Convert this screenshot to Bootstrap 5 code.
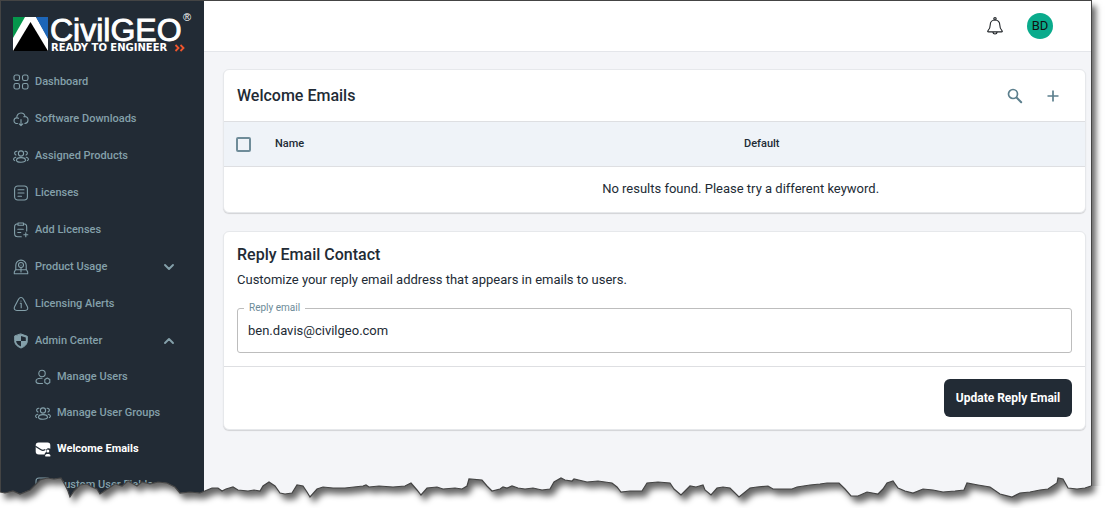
<!DOCTYPE html>
<html lang="en">
<head>
<meta charset="utf-8">
<meta name="viewport" content="width=device-width, initial-scale=1">
<title>CivilGEO - Welcome Emails</title>
<link href="https://cdn.jsdelivr.net/npm/bootstrap@5.3.0/dist/css/bootstrap.min.css" rel="stylesheet">
<style>
  body { font-family: Roboto, "Liberation Sans", sans-serif; font-size: 13px; line-height: 20px; color: #222b35; background: #fff; }
  .stage { height: 100vh; padding-right: 15px; padding-bottom: 10px; }
  .app-window { background: #f4f5f8; border: 1px solid #444; border-width: 1px 1px 0 1px; box-shadow: 4px 6px 6px rgba(0,0,0,.6); }
  .app-sidebar { width: 203px; background: #222b35; }
  .brand-logo { margin: 9px 0 0 10px; }
  .side-link { display: flex; align-items: center; height: 37px; padding: 0 27px 0 12px; gap: 6px; font-size: 11px; font-weight: 500; color: #84a0aa; text-decoration: none; }
  .side-link svg.glyph { width: 16px; height: 16px; flex: none; }
  .side-sub .side-link { height: 36px; padding-left: 34px; }
  .side-link.active { color: #fff; font-weight: 700; }
  .glyph { fill: none; stroke: currentColor; stroke-width: 1.1; stroke-linecap: round; stroke-linejoin: round; }
  .top-strip { height: 51px; background: #fff; border-bottom: 1px solid #e4e6ea; padding-right: 38px; gap: 22px; }
  .avatar { width: 26px; height: 26px; background: #0aab8c; color: #111; font-size: 13px; line-height: 22px; }
  .content { padding: 17px 5px 20px 19px; gap: 18px; }
  .panel { border: 1px solid #e6e8eb; border-radius: 6px; box-shadow: 0 1px 1px rgba(0,0,0,.14); overflow: hidden; }
  .panel h2 { font-size: 16px; line-height: 20px; font-weight: 500; margin: 0; }
  .panel-top { height: 51px; padding: 0 13px; }
  .tool-btn { width: 38px; height: 38px; color: #5c7f8d; padding: 0; border: 0; }
  .email-table { table-layout: fixed; font-size: 13px; color: inherit; }
  .email-table th { height: 45px; padding: 0 12px; background: #eff3f8; border: 1px solid #dedfe2; border-width: 1px 0; font-size: 11px; font-weight: 500; color: #222b35; vertical-align: middle; }
  .email-table td { height: 45px; padding: 0 0 0 20%; border: 0; text-align: center; vertical-align: middle; color: #222b35; }
  .col-tick { width: 39px; }
  .col-default { width: 41%; }
  .tick { appearance: none; display: block; width: 15px; height: 15px; margin: 0; border: 2px solid #6f8c99; border-radius: 2px; }
  .tick:checked { background: #6f8c99; }
  .panel-main { padding: 13px; }
  .panel-main p { margin: 5px 0 18px; }
  .field input { height: 45px; font-size: 13px; padding: 0 10px; border: 1px solid #bdbdbd; border-radius: 3px; color: #222b35; }
  .field label { position: absolute; top: -7px; left: 7px; padding: 0 5px; font-size: 10px; line-height: 14px; background: #fff; color: #6c8b98; }
  .panel-foot { padding: 12px 13px; border-top: 1px solid #dedfe2; }
  .btn-update { height: 38px; width: 128px; padding: 0; border-radius: 6px; background: #222b35; color: #fff; font-size: 12px; font-weight: 700; }
  .btn-update:hover { background: #33404d; color: #fff; }
  .torn-edge { position: absolute; left: 0; bottom: 0; width: 100%; height: 38px; pointer-events: none; }
</style>
</head>
<body class="overflow-hidden">
<svg width="0" height="0" class="position-absolute" aria-hidden="true">
  <symbol id="i-group" viewBox="0 0 16 16"><circle cx="8" cy="5.500" r="2.600"/><path d="M3.500 12.300c0-1.700 2-2.700 4.500-2.700s4.500 1 4.500 2.700-2 1.900-4.500 1.900-4.500-.2-4.500-1.900zM4 3.200C2.300 3 1.500 4.200 1.700 5.400c.1.900.7 1.400 1.300 1.700M2.800 9.200C.2 9.800 0 12 1.700 12.600M12 3.200c1.700-.2 2.500 1 2.300 2.200-.1.900-.7 1.400-1.300 1.700M13.200 9.200c2.600.6 2.800 2.800 1.100 3.400"/></symbol>
</svg>
<div class="stage position-relative overflow-hidden">
  <div class="app-window d-flex h-100">
    <aside class="app-sidebar flex-shrink-0 overflow-hidden">
      <a href="#" class="d-block" aria-label="CivilGEO home"><svg class="brand-logo d-block" width="184" height="45" viewBox="11 10 184 45" role="img">
        <path fill="#05964c" d="M13 17h17L13 42z"/><path fill="#fff" d="M25 17h11l12 21v13H13V38z"/><path fill="#1d66b8" d="M36 17h12v22z"/><path fill="#000" d="M30.500 22L48 51H13z"/>
        <text x="50" y="41" font-family="Liberation Sans, Arial, sans-serif" font-size="32" fill="#fff" stroke="#fff" stroke-width=".9">CivilGEO</text>
        <text x="183" y="21" font-family="Liberation Sans, Arial, sans-serif" font-size="11" fill="#fff">®</text>
        <text x="51" y="51" font-family="DejaVu Sans, sans-serif" font-weight="700" font-size="10" fill="#fff">READY TO ENGINEER</text>
        <path d="M175.500 45l3 3-3 3M180.500 45l3 3-3 3" fill="none" stroke="#f0562d" stroke-width="1.800"/>
      </svg></a>
      <nav class="pt-2" aria-label="Main">
        <a class="side-link" href="#"><svg class="glyph" viewBox="0 0 16 16"><rect x="1" y="1" width="5.500" height="5.500" rx="1.800"/><rect x="9.500" y="1" width="5.500" height="5.500" rx="1.800"/><rect x="1" y="9.500" width="5.500" height="5.500" rx="1.800"/><rect x="9.500" y="9.500" width="5.500" height="5.500" rx="1.800"/></svg>Dashboard</a>
        <a class="side-link" href="#"><svg class="glyph" viewBox="0 0 16 16"><path d="M4.500 12.500C2.500 12.700 1 11.400 1 9.700 1 8 2.200 7 3.800 6.800 3.600 4 5.500 2 8 2c2.300 0 3.700 1.500 4.100 3.500 1.900.4 3.100 1.900 2.900 3.900-.1 1.700-1.400 2.900-3.200 3.100M3.800 6.800c.6 0 1.200.2 1.600.5M12.100 5.500c-.5 0-.9.100-1.300.3M8 8.500v6M6.200 12.800L8 14.600l1.800-1.800"/></svg>Software Downloads</a>
        <a class="side-link" href="#"><svg class="glyph"><use href="#i-group"/></svg>Assigned Products</a>
        <a class="side-link" href="#"><svg class="glyph" viewBox="0 0 16 16"><rect x="1.600" y="1" width="12.800" height="14" rx="3.200"/><path d="M5 4.800h6M5 8h6M5 11.200h3.500"/></svg>Licenses</a>
        <a class="side-link" href="#"><svg class="glyph" viewBox="0 0 16 16"><path d="M5 1.800C2.500 1.800 1.600 2.500 1.600 5v6.500c0 2.500.9 3.300 3.200 3.300h3.500M10.500 1.800c2.400 0 3.200.8 3.200 3.200v4M5 1h5.500v2.300H5zM4.800 7.200h5.500M4.800 10.500h3M12.800 10.800v4M10.800 12.800h4"/></svg>Add Licenses</a>
        <a class="side-link" href="#" aria-expanded="false"><svg class="glyph" viewBox="0 0 16 16"><path d="M2.800 10.500V6.300a5.200 5.200 0 0 1 10.400 0v4.200M2.500 10.800h11l1.200 2.200v1.800H1.300V13zM8 8.500v4.500"/><circle cx="8" cy="6" r="2.500"/><path d="M8 6v.1"/></svg><span class="flex-grow-1">Product Usage</span><svg class="glyph" viewBox="0 0 16 16"><path stroke-width="1.900" d="M4 6l4 4 4-4"/></svg></a>
        <a class="side-link" href="#"><svg class="glyph" viewBox="0 0 16 16"><path d="M5.500 3.200c1.400-2.300 3.600-2.300 5 0l3.800 7.200c1.200 2.300.2 4.100-2.300 4.100H4c-2.500 0-3.500-1.800-2.300-4.100zM7.300 7.200H8.200v4.600M8 5v.1"/></svg>Licensing Alerts</a>
        <a class="side-link" href="#" aria-expanded="true"><svg class="glyph" viewBox="0 0 16 16"><path fill="currentColor" stroke-width="1" d="M8 1l6.300 2.300v4.400c0 3.500-2.600 6-6.300 7.300-3.700-1.300-6.300-3.800-6.300-7.300V3.300z"/><path fill="#222b35" stroke="none" d="M8 3l4.800 1.600V8H8zM8 8v5.500C5.200 12.500 3.300 10.600 3.100 8z"/></svg><span class="flex-grow-1">Admin Center</span><svg class="glyph" viewBox="0 0 16 16"><path stroke-width="1.900" d="M4 10l4-4 4 4"/></svg></a>
        <div class="side-sub">
          <a class="side-link" href="#"><svg class="glyph" viewBox="0 0 16 16"><circle cx="7" cy="4.500" r="3.200"/><path d="M7.500 14.500H4.300c-2 0-3.300-.8-3.300-2.200 0-1.800 2.300-3 5-3h1M12.300 9l2.500 1.500v3l-2.500 1.500-2.500-1.500v-3z"/></svg>Manage Users</a>
          <a class="side-link" href="#"><svg class="glyph"><use href="#i-group"/></svg>Manage User Groups</a>
          <a class="side-link active" href="#" aria-current="page"><svg class="glyph" viewBox="0 0 16 16"><path fill="currentColor" stroke="none" d="M3.500 1.500h9C14.500 1.500 15.300 2.500 15.300 4.300v3.500c-.7-.8-3.800-1-4.300 1.500-.1.700 0 1.300.2 1.700-1 .5-1.500 1.200-1.600 2.500H4C1.700 13.500.7 12.500.7 10.500v-6C.7 2.500 1.600 1.500 3.500 1.500z"/><path stroke="#222b35" stroke-width="1.300" d="M.8 5.500L6 8.800c1.300.8 2.500.8 3.900 0"/><circle cx="12.800" cy="10" r="1.500" fill="currentColor" stroke="none"/><path fill="currentColor" stroke="none" d="M10.300 15.500v-1.300c0-1.700 5-1.700 5 0v1.300z"/></svg>Welcome Emails</a>
          <a class="side-link" href="#"><svg class="glyph" viewBox="0 0 16 16"><rect x="1" y="1" width="14" height="14" rx="3"/></svg>Custom User Fields</a>
        </div>
      </nav>
    </aside>
    <div class="flex-grow-1 overflow-hidden">
      <header class="top-strip d-flex align-items-center justify-content-end">
        <button class="btn p-0 border-0 d-flex" type="button" aria-label="Notifications"><svg class="glyph" width="20" height="20" viewBox="0 0 20 20"><circle cx="10" cy="2.800" r="1.200"/><path d="M10 4c-3 0-4.800 2-4.800 5 0 2.800-.8 4.200-2 5.300-.9 1-.6 1.600.4 1.600h12.800c1 0 1.300-.6.400-1.600-1.200-1.100-2-2.500-2-5.300 0-3-1.800-5-4.800-5zM7.800 16.200c.4 2.300 4 2.300 4.400 0"/></svg></button>
        <button class="avatar btn border-0 p-0 rounded-circle" type="button" aria-label="Account: BD">BD</button>
      </header>
      <main class="content d-flex flex-column">
        <section class="panel bg-white">
          <div class="panel-top d-flex align-items-center">
            <h2 class="flex-grow-1">Welcome Emails</h2>
            <button class="tool-btn btn" type="button" aria-label="Search"><svg class="glyph" width="18" height="18" viewBox="0 0 18 18"><circle cx="7" cy="7" r="4.500" stroke-width="1.700"/><path stroke-width="2" d="M10.800 10.800l4.400 4.400"/></svg></button>
            <button class="tool-btn btn" type="button" aria-label="Add"><svg class="glyph" width="18" height="18" viewBox="0 0 18 18"><path stroke-width="1.700" stroke-linecap="butt" d="M9 3.500v11M3.500 9h11"/></svg></button>
          </div>
          <table class="email-table table mb-0">
            <thead><tr><th class="col-tick" scope="col"><input class="tick" type="checkbox" aria-label="Select all"></th><th scope="col">Name</th><th class="col-default" scope="col">Default</th></tr></thead>
            <tbody><tr><td colspan="3">No results found. Please try a different keyword.</td></tr></tbody>
          </table>
        </section>
        <section class="panel bg-white">
          <div class="panel-main">
            <h2>Reply Email Contact</h2>
            <p>Customize your reply email address that appears in emails to users.</p>
            <div class="field position-relative">
              <input class="form-control" id="reply" type="email" value="ben.davis@civilgeo.com">
              <label for="reply">Reply email</label>
            </div>
          </div>
          <div class="panel-foot d-flex justify-content-end"><button class="btn-update btn" type="button">Update Reply Email</button></div>
        </section>
      </main>
    </div>
  </div>
  <svg class="torn-edge" viewBox="0 470 1107 38" preserveAspectRatio="none" aria-hidden="true">
    <defs>
      <path id="rip" d="M0 492L5 493 13 491 20 494 30 490 35 485 40 480 47 478 54 479 61 478 65 485 68 491 70 497 74 491 80 485 87 484 92 487 97 489 100 494 106 490 115 484 122 486 128 481 137 486 142 482 150 484 158 482 167 483 175 487 180 493 190 492 200 493 212 488 218 488 222 491 226 489 233 487 238 490 248 491 254 490 260 491 263 486 269 482 275 486 280 493 285 494 292 493 297 485 303 486 307 492 310 497 317 489 323 487 333 488 345 488 363 486 366 485 369 487 379 486 393 487 405 486 411 483 417 490 421 495 427 488 437 487 443 489 455 488 462 489 467 486 469 479 482 480 487 486 492 491 500 489 503 487 507 488 512 486 518 488 525 489 533 488 542 490 550 489 554 482 561 478 565 480 572 481 574 479 587 482 598 481 612 483 617 487 621 492 630 491 642 491 647 483 658 482 670 483 674 489 681 495 690 486 696 487 703 485 705 490 711 495 717 488 723 487 730 488 739 497 750 488 757 487 768 486 773 489 792 489 797 487 810 485 820 484 827 483 839 483 845 489 851 496 858 496 867 492 878 494 883 489 887 483 893 481 898 488 905 491 913 493 923 489 933 490 943 492 955 491 964 490 967 483 978 485 990 487 1000 494 1012 497 1020 493 1030 492 1040 490 1048 489 1057 483 1058 478 1063 479 1068 488 1077 489 1085 488 1091 486"/>
      <clipPath id="below"><path id="paper" d=""/></clipPath>
      <filter id="soft" filterUnits="userSpaceOnUse" x="-20" y="380" width="1147" height="140"><feGaussianBlur stdDeviation="3"/></filter>
    </defs>
    <g clip-path="url(#below)">
      <path fill="#fff" d="M0 470H1107V508H0z"/>
      <g filter="url(#soft)"><path id="cast" fill="#000" fill-opacity=".6" transform="translate(4 6)" d=""/></g>
    </g>
    <use href="#rip" fill="none" stroke="#444" stroke-width="1.200"/>
  </svg>
</div>
<script src="https://cdn.jsdelivr.net/npm/bootstrap@5.3.0/dist/js/bootstrap.bundle.min.js"></script>
<script>
  // The rip line bounds both the cast shadow (above it) and the bare paper (below it).
  const rip = document.getElementById('rip').getAttribute('d');
  document.getElementById('cast').setAttribute('d', rip + 'V380H0z');
  document.getElementById('paper').setAttribute('d', rip + 'H1107V508H0z');
</script>
</body>
</html>
